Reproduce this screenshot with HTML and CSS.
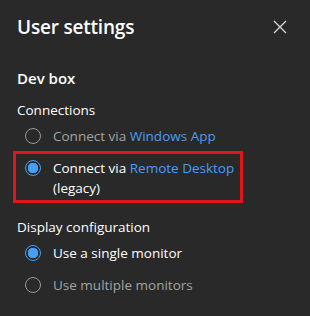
FILE: index.html
```html
<!DOCTYPE html>
<html lang="en">
<head>
    <meta charset="UTF-8">
    <title>User settings</title>
    <link rel="stylesheet" href="styles.css">
</head>
<body>
    <div class="panel">
        <div class="panel-header">
            <h1 class="panel-title">User settings</h1>
            <button class="close-btn" aria-label="Close">
                <svg width="14" height="14" viewBox="0 0 14 14">
                    <path d="M1 1 L13 13 M13 1 L1 13" stroke="#d6d6d6" stroke-width="1.3" fill="none"/>
                </svg>
            </button>
        </div>

        <h2 class="section-title">Dev box</h2>

        <div class="group-label">Connections</div>
        <div class="radio-list">
            <label class="radio-row">
                <span class="radio"></span>
                <span class="radio-text">Connect via <span class="link">Windows App</span></span>
            </label>
            <label class="radio-row is-checked highlight">
                <span class="radio"></span>
                <span class="radio-text"><span class="nowrap">Connect via <span class="link">Remote Desktop</span></span><br>(legacy)</span>
            </label>
        </div>

        <div class="group-label display-label">Display configuration</div>
        <div class="radio-list">
            <label class="radio-row is-checked">
                <span class="radio"></span>
                <span class="radio-text">Use a single monitor</span>
            </label>
            <label class="radio-row">
                <span class="radio"></span>
                <span class="radio-text">Use multiple monitors</span>
            </label>
        </div>
    </div>
</body>
</html>
```

FILE: styles.css
```css
:root {
    --bg: #292929;
    --text: #ffffff;
    --muted: #a3a3a3;
    --link: #479ef5;
    --red: #e0161b;
}

body {
    margin: 0;
    background: var(--bg);
    font-family: 'Open Sans', 'Noto Sans', sans-serif;
    color: var(--text);
}

.panel {
    padding: 12px 17px 0 17px;
}

.panel-header {
    display: flex;
    align-items: center;
    justify-content: space-between;
    height: 30px;
}

.panel-title {
    margin: 0;
    font-size: 19px;
    font-weight: 600;
    letter-spacing: -0.2px;
}

.close-btn {
    background: none;
    border: none;
    padding: 0;
    margin-right: 6px;
    width: 14px;
    height: 14px;
    display: flex;
}

.section-title {
    margin: 26px 0 0;
    font-size: 15px;
    font-weight: 600;
    line-height: 20px;
}

.group-label {
    margin-top: 12px;
    font-size: 13.5px;
    line-height: 20px;
}

.display-label {
    margin-top: 14px;
}

.radio-list {
    display: flex;
    flex-direction: column;
}

.radio-row {
    display: flex;
    align-items: flex-start;
    gap: 12px;
    padding: 6px 8px;
    font-size: 13.5px;
    line-height: 20px;
    color: var(--muted);
}

.radio-row.is-checked {
    color: var(--text);
}

.highlight {
    margin: -1px 50px 0 -4px;
    padding: 4px 2px 2px 9px;
    border: 3px solid var(--red);
}

.nowrap {
    white-space: nowrap;
}

.radio {
    flex: none;
    box-sizing: border-box;
    width: 16px;
    height: 16px;
    margin-top: 2px;
    border: 1px solid #9a9a9a;
    border-radius: 50%;
}

.is-checked .radio {
    border-color: var(--link);
    background: radial-gradient(circle, var(--link) 0 5px, var(--bg) 5.5px);
}

.link {
    color: var(--link);
}
```
